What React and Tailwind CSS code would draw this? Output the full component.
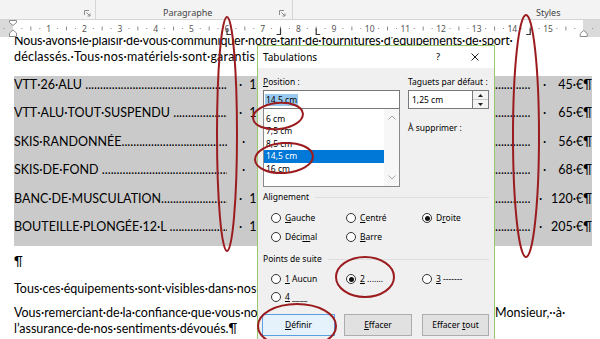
import React from "react";

const CM = 35.67;
const X0 = 13;
const DOTS = ".".repeat(140);

const ROWS = [
  { name: "VTT·26·ALU ", mid: true, price: "45·€¶", wide: false },
  { name: "VTT·ALU·TOUT·SUSPENDU ", mid: true, price: "65·€¶", wide: false },
  { name: "SKIS·RANDONNÉE", mid: false, price: "56·€¶", wide: false },
  { name: "SKIS·DE·FOND ", mid: false, price: "68·€¶", wide: false },
  { name: "BANC·DE·MUSCULATION", mid: true, price: "120·€¶", wide: true },
  { name: "BOUTEILLE·PLONGÉE·12·L ", mid: true, price: "205·€¶", wide: true },
];

function Launcher() {
  return (
    <svg width="7" height="7" viewBox="0 0 7 7" className="shrink-0">
      <path d="M0.5 5 V0.5 H5" fill="none" stroke="#8a8a8a" strokeWidth="1" />
      <path d="M2.5 2.5 L6 6 M6 3.5 V6 H3.5" fill="none" stroke="#8a8a8a" strokeWidth="1" />
    </svg>
  );
}

function Ribbon() {
  return (
    <div className="h-[20px] shrink-0 bg-[#f3f3f3] border-b border-[#d5d5d5] flex font-['Noto_Sans',sans-serif] text-[9px] leading-[12px] text-[#444]">
      <div className="w-[96px] border-r border-[#d6d6d6] flex items-start justify-end pr-[4px] pt-[10px]">
        <Launcher />
      </div>
      <div className="w-[197px] border-r border-[#d6d6d6] flex items-start pt-[7px] pl-[67px] pr-[6px]">
        <span>Paragraphe</span>
        <span className="ml-auto mt-[3px]"><Launcher /></span>
      </div>
      <div className="flex-1 flex items-start pt-[7px] pl-[243px]">
        <span>Styles</span>
      </div>
    </div>
  );
}

function Ruler() {
  const items = [];
  for (let q = -1; q <= 66; q++) {
    const x = X0 + (q * CM) / 4;
    if (x < 0 || x > 600) continue;
    if (q % 4 === 0) {
      const n = q / 4;
      if (n >= 1 && n <= 15) {
        items.push(
          <text key={q} x={x} y={11.5} textAnchor="middle" fontSize="8.5" fill="#555" fontFamily="Noto Sans, sans-serif">
            {n}
          </text>
        );
      }
    } else if (q % 2 === 0) {
      items.push(<rect key={q} x={x - 0.5} y={6.5} width={1} height={4} fill="#8c8c8c" />);
    } else {
      items.push(<rect key={q} x={x - 0.5} y={8} width={1} height={1} fill="#8c8c8c" />);
    }
  }
  const t6 = X0 + 6 * CM;
  const t75 = X0 + 7.5 * CM;
  const t85 = X0 + 8.5 * CM;
  const t145 = X0 + 14.5 * CM;
  const r16 = X0 + 16 * CM;
  return (
    <div className="relative h-[17px] shrink-0 flex">
      <div className="w-[13px] bg-[#dadada]" />
      <div className="w-[570px] bg-white" />
      <div className="flex-1 bg-[#dadada]" />
      <svg className="absolute left-0 top-0" width="600" height="17" viewBox="0 0 600 17">
        {items}
        <path d={`M${t6} 8.5 V14.5 H${t6 + 4}`} fill="none" stroke="#333" strokeWidth="1.2" />
        <path d={`M${t75} 8.5 V14.5 H${t75 - 4}`} fill="none" stroke="#333" strokeWidth="1.2" />
        <path d={`M${t85} 8.5 V14.5 H${t85 + 4}`} fill="none" stroke="#333" strokeWidth="1.2" />
        <path d={`M${t145} 8.5 V14.5 H${t145 - 4}`} fill="none" stroke="#333" strokeWidth="1.2" />
        <path d="M9.5 0.5 H16.5 V2.5 L13 5.5 L9.5 2.5 Z" fill="#fff" stroke="#8a8a8a" strokeWidth="1" />
        <path d="M13 10 L16.5 13 V16.5 H9.5 V13 Z" fill="#fff" stroke="#8a8a8a" strokeWidth="1" />
        <path d={`M${r16} 10.5 L${r16 + 3.5} 13.5 V16.5 H${r16 - 3.5} V13.5 Z`} fill="#fff" stroke="#8a8a8a" strokeWidth="1" />
      </svg>
    </div>
  );
}

function Document() {
  return (
    <div className="flex-1 overflow-hidden pl-[14px] text-black font-['Lato',sans-serif] text-[12.5px] leading-[16px] whitespace-nowrap">
      <div className="-mt-[4px] tracking-[-0.13px]">Nous·avons·le·plaisir·de·vous·communiquer·notre·tarif·de·fournitures·d’équipements·de·sport·</div>
      <div className="tracking-[0.2px]">déclassés.·Tous·nos·matériels·sont·garantis<span className="ml-[4px]">·un·an.¶</span></div>
      <div className="mt-[11px] w-[578px] bg-[#cacaca]">
        {ROWS.map((r) => (
          <div key={r.name} className="flex h-[28.4px] pt-[1px]">
            <div className="w-[213px] overflow-hidden">
              {r.name}
              {DOTS}
            </div>
            <div className="w-[268px] overflow-hidden">
              <span className={r.mid ? "ml-[12px]" : "ml-[15px]"}>·</span>
              {r.mid ? <span className="ml-[7px]">1</span> : null}
            </div>
            <div className="w-[35px] overflow-hidden">{DOTS}</div>
            <div className="flex-1 flex">
              <span className={r.wide ? "ml-[9px]" : "ml-[13px]"}>·</span>
              <span className="ml-auto">{r.price}</span>
            </div>
          </div>
        ))}
      </div>
      <div className="mt-[8px]">¶</div>
      <div className="mt-[11px]">Tous·ces·équipements·sont·visibles·dans·nos·magasins.¶</div>
      <div className="mt-[8px] flex">
        <div className="w-[481px] overflow-hidden">Vous·remerciant·de·la·confiance·que·vous·nous·témoignez,·nous·vous·prions·d’agréer,·Madame,·</div>
        <div>Monsieur,··à·</div>
      </div>
      <div>l’assurance·de·nos·sentiments·dévoués.¶</div>
    </div>
  );
}

function Radio({ checked, children, className }) {
  return (
    <div className={"flex items-center " + (className || "")}>
      <span className="w-[10px] h-[10px] rounded-full border border-[#333] bg-white flex items-center justify-center shrink-0">
        {checked ? <span className="w-[5px] h-[5px] rounded-full bg-[#111]" /> : null}
      </span>
      <span className="ml-[4px]">{children}</span>
    </div>
  );
}

function Chevron({ up }) {
  return (
    <svg width="8" height="5" viewBox="0 0 8 5">
      <path d={up ? "M0.5 4.5 L4 1 L7.5 4.5" : "M0.5 0.5 L4 4 L7.5 0.5"} fill="none" stroke="#a6a6a6" strokeWidth="1" />
    </svg>
  );
}

function Dialog() {
  return (
    <div className="absolute left-[257px] top-[45px] w-[238px] h-[300px] border border-[#98c96b] bg-[#f0f0f0] font-['Noto_Sans',sans-serif] text-[8.5px] leading-[12px] text-black">
      <div className="h-[22px] bg-white flex items-center pl-[5px]">
        <span className="text-[10px]">Tabulations</span>
        <span className="ml-auto text-[9.5px]">?</span>
        <span className="ml-[31px] mr-[15px] flex">
          <svg width="8" height="8" viewBox="0 0 8 8">
            <path d="M0.5 0.5 L7.5 7.5 M7.5 0.5 L0.5 7.5" stroke="#222" strokeWidth="1" />
          </svg>
        </span>
      </div>
      <div className="px-[5px]">
        <div className="flex gap-[8px]">
          <div className="w-[137px]">
            <div className="pt-[8px]">
              <u>P</u>osition :
            </div>
            <div className="mt-[2px] h-[19px] border border-[#7a7a7a] bg-white flex items-center pl-[1px]">
              <span className="bg-[#99c9ef] px-[1px]">14,5 cm</span>
            </div>
            <div className="h-[78px] border border-t-0 border-[#8a8a8a] bg-white flex">
              <div className="flex-1 pt-[3.5px]">
                <div className="h-[12.5px] pl-[2px]">6 cm</div>
                <div className="h-[12.5px] pl-[2px]">7,5 cm</div>
                <div className="h-[12.5px] pl-[2px]">8,5 cm</div>
                <div className="h-[12.5px] pl-[2px] bg-[#0078d7] text-white">14,5 cm</div>
                <div className="h-[12.5px] pl-[2px]">16 cm</div>
              </div>
              <div className="w-[15px] bg-[#f7f7f7] flex flex-col items-center justify-between pt-[6px] pb-[6px]">
                <Chevron up />
                <Chevron />
              </div>
            </div>
          </div>
          <div className="flex-1">
            <div className="pt-[8px]">Taguets par défaut :</div>
            <div className="mt-[2px] h-[19px] flex">
              <div className="flex-1 border border-[#7a7a7a] bg-white flex items-center pl-[3px]">1,25 cm</div>
              <div className="w-[16px] border border-l-0 border-[#7a7a7a] bg-[#f3f3f3] flex flex-col">
                <div className="flex-1 flex items-center justify-center border-b border-[#c9c9c9]">
                  <svg width="5" height="3" viewBox="0 0 5 3"><path d="M0 3 L2.5 0 L5 3 Z" fill="#222" /></svg>
                </div>
                <div className="flex-1 flex items-center justify-center">
                  <svg width="5" height="3" viewBox="0 0 5 3"><path d="M0 0 L2.5 3 L5 0 Z" fill="#222" /></svg>
                </div>
              </div>
            </div>
            <div className="mt-[13px]">À supprimer :</div>
          </div>
        </div>

        <div className="mt-[4px] flex items-center gap-[6px]">
          <span>Alignement</span>
          <span className="flex-1 h-px bg-[#dedede]" />
        </div>
        <div className="mt-[9px] flex pl-[8px] h-[12px]">
          <Radio className="w-[75px]"><u>G</u>auche</Radio>
          <Radio className="w-[76px]"><u>C</u>entré</Radio>
          <Radio checked>D<u>r</u>oite</Radio>
        </div>
        <div className="mt-[7px] flex pl-[8px] h-[12px]">
          <Radio className="w-[75px]">Déci<u>m</u>al</Radio>
          <Radio className="w-[76px]"><u>B</u>arre</Radio>
        </div>

        <div className="mt-[10px] flex items-center gap-[6px]">
          <span>Points de suite</span>
          <span className="flex-1 h-px bg-[#dedede]" />
        </div>
        <div className="mt-[8px] flex pl-[8px] h-[12px]">
          <Radio className="w-[75px]"><u>1</u> Aucun</Radio>
          <Radio checked className="w-[76px]"><u>2</u> .......</Radio>
          <Radio><u>3</u> -------</Radio>
        </div>
        <div className="mt-[6px] flex pl-[8px] h-[12px]">
          <Radio className="w-[75px]"><u>4</u> ____</Radio>
        </div>

        <div className="mt-[11px] flex -ml-[1px]">
          <button className="w-[73px] h-[22px] border border-[#5a9fe0] bg-[#e5f1fb] text-[8.5px]">
            <u>D</u>éfinir
          </button>
          <button className="ml-[9px] w-[68px] h-[22px] border border-[#adadad] bg-[#e1e1e1] text-[8.5px]">
            <u>E</u>ffacer
          </button>
          <button className="ml-[10px] w-[67px] h-[22px] border border-[#adadad] bg-[#e1e1e1] text-[8.5px]">
            Effacer <u>t</u>out
          </button>
        </div>
      </div>
    </div>
  );
}

function Annotations() {
  const s = { fill: "none", stroke: "#9b1c1f", strokeWidth: 2 };
  return (
    <svg className="absolute left-0 top-0 pointer-events-none" width="600" height="339" viewBox="0 0 600 339">
      <ellipse cx="227" cy="134" rx="10" ry="117" {...s} />
      <ellipse cx="526" cy="136" rx="13" ry="121" {...s} />
      <ellipse cx="278" cy="116" rx="25" ry="13" transform="rotate(-6 278 116)" {...s} />
      <ellipse cx="284" cy="158" rx="29" ry="15" transform="rotate(-4 284 158)" {...s} />
      <ellipse cx="365" cy="277" rx="29" ry="20" {...s} />
      <ellipse cx="297" cy="326" rx="39" ry="22" {...s} />
    </svg>
  );
}

export default function App() {
  return (
    <div className="relative w-[600px] h-[339px] overflow-hidden bg-white flex flex-col">
      <Ribbon />
      <Ruler />
      <Document />
      <Dialog />
      <Annotations />
    </div>
  );
}
